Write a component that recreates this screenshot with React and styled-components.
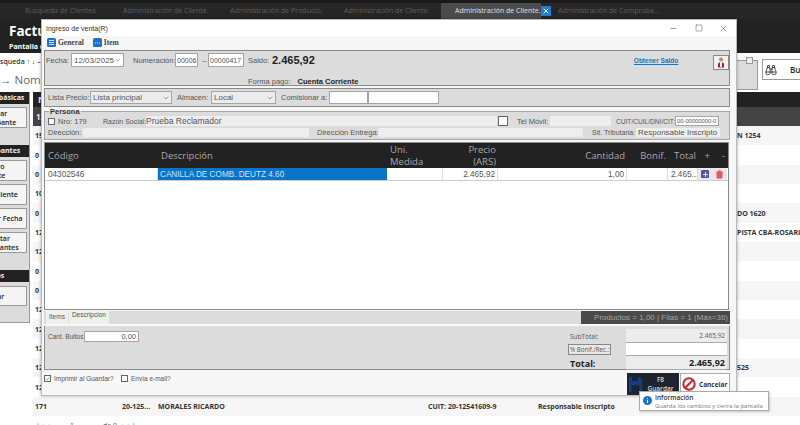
import React from 'react';
import styled, { createGlobalStyle } from 'styled-components';
import { Trash2, Plus, Check, X, Minus, Square, ChevronDown, Binoculars } from 'lucide-react';

const GlobalStyle = createGlobalStyle`
  html, body { margin: 0; padding: 0; background: #fff; }
  * { box-sizing: border-box; }
`;

/* background screen */
const Page = styled.div`
  position: relative;
  width: 800px;
  height: 425px;
  overflow: hidden;
  font-family: "Open Sans", sans-serif;
  background: #fff;
  display: flex;
  flex-direction: column;
`;
const TabBar = styled.div`
  height: 19px;
  flex: none;
  background: #262626;
  border-top: 3px solid #1a1a1a;
  display: flex;
  padding-left: 25px;
`;
const AppTab = styled.div`
  width: ${p => p.$w}px;
  flex: none;
  font-size: 7px;
  line-height: 15px;
  white-space: nowrap;
  color: ${p => (p.$active ? '#e0e0e0' : '#5e5e5e')};
  background: ${p => (p.$active ? '#4b4b4b' : 'transparent')};
  padding-left: ${p => (p.$active ? 14 : 0)}px;
`;
const TabClose = styled.div`
  width: 10px;
  height: 10px;
  margin: 3px 7px 0 0;
  flex: none;
  background: #1d7fd0;
  color: #fff;
  display: flex;
  align-items: center;
  justify-content: center;
`;
const Header = styled.div`
  height: 34px;
  flex: none;
  background: #222;
  color: #fff;
  padding: 2px 0 0 9px;
`;
const HeaderTitle = styled.div`
  font-size: 13.5px;
  font-weight: 700;
  line-height: 20px;
`;
const HeaderSub = styled.div`
  font-size: 7px;
  font-weight: 700;
  line-height: 11px;
`;
const SearchBar = styled.div`
  height: 39px;
  flex: none;
  display: flex;
  justify-content: space-between;
  background: #fff;
`;
const SearchLeft = styled.div`
  padding-top: 1px;
`;
const SearchLabel = styled.div`
  font-size: 7px;
  font-weight: 600;
  color: #333;
  line-height: 16px;
  margin-left: -9px;
`;
const SearchValue = styled.div`
  font-size: 11.5px;
  color: #666;
  line-height: 20px;
  white-space: nowrap;
`;
const SearchRight = styled.div`
  display: flex;
  gap: 4px;
  padding-top: 6px;
`;
const CollapseBox = styled.div`
  width: 28px;
  height: 30px;
  margin-top: 1px;
  background: #dcdcdc;
  border: 1px solid #999;
  border-left: none;
  position: relative;
`;
const CollapseBtn = styled.div`
  position: absolute;
  top: -4px;
  left: 16px;
  width: 7px;
  height: 7px;
  background: #eee;
  border: 1px solid #999;
`;
const FindBtn = styled.div`
  width: 38px;
  height: 21px;
  flex: none;
  border: 1px solid #999;
  border-right: none;
  display: flex;
  align-items: center;
  gap: 13px;
  padding-left: 2px;
  font-size: 8px;
  font-weight: 600;
  color: #222;
  overflow: hidden;
  white-space: nowrap;
  svg { flex: none; }
`;
const Body = styled.div`
  display: flex;
  flex: 1;
  min-height: 0;
`;
const Sidebar = styled.div`
  width: 70px;
  margin-left: -40px;
  flex: none;
  height: 231px;
  background: #dcdcdc;
  border-bottom: 1px solid #999;
  border-right: 1px solid #999;
  display: flex;
  flex-direction: column;
`;
const SideTitle = styled.div`
  height: 12px;
  flex: none;
  background: #222;
  color: #eee;
  font-size: 7px;
  font-weight: 700;
  line-height: 12px;
  text-align: center;
  margin-top: ${p => p.$top || 0}px;
  white-space: nowrap;
`;
const SideBtn = styled.div`
  height: ${p => p.$h || 21}px;
  flex: none;
  margin: ${p => p.$top ?? 3}px 2px 0 0;
  background: #f5f5f5;
  border: 1px solid #999;
  font-size: 7px;
  font-weight: 600;
  line-height: 9px;
  color: #222;
  display: flex;
  align-items: center;
  justify-content: center;
  text-align: center;
`;
const Main = styled.div`
  flex: 1;
  min-width: 0;
  margin-left: 3px;
  display: flex;
  flex-direction: column;
`;
const GridTitle = styled.div`
  height: 15px;
  flex: none;
  background: #222;
  color: #eee;
  font-size: 9px;
  font-weight: 700;
  padding-left: 5px;
  line-height: 15px;
`;
const GridFilter = styled.div`
  height: 19px;
  flex: none;
  background: #444;
  color: #eee;
  font-size: 8px;
  font-weight: 700;
  padding-left: 3px;
  line-height: 19px;
`;
const Row = styled.div`
  height: 19.35px;
  flex: none;
  display: grid;
  grid-template-columns: 87px 36px 270px 110px 1fr 63px;
  padding-left: 2px;
  align-items: center;
  font-size: 7px;
  font-weight: 700;
  color: #333;
  background: ${p => (p.$shaded ? '#f6f6f6' : '#fff')};
  white-space: nowrap;
  overflow: hidden;
`;
const Pager = styled.div`
  display: flex;
  padding: 5px 0 0 3px;
  font-size: 7px;
  color: #555;
`;
const PagerItem = styled.span`
  width: ${p => p.$w}px;
  flex: none;
`;

/* dialog */
const Dialog = styled.div`
  position: absolute;
  left: 41px;
  top: 19px;
  width: 696px;
  height: 377px;
  background: #f7f7f7;
  border: 1px solid #bbb;
  box-shadow: 0 0 3px rgba(0, 0, 0, 0.35);
  font-family: "Liberation Sans", Arial, sans-serif;
  font-size: 7.5px;
  color: #444;
  display: flex;
  flex-direction: column;
`;
const TitleBar = styled.div`
  height: 16px;
  flex: none;
  background: #fff;
  display: flex;
  justify-content: space-between;
  align-items: center;
  padding: 0 0 0 4px;
  color: #333;
  font-size: 7px;
`;
const WinBtns = styled.div`
  display: flex;
  align-items: center;
  gap: 16.5px;
  padding-right: 8px;
  color: #555;
`;
const Ribbon = styled.div`
  height: 13px;
  flex: none;
  display: flex;
  align-items: center;
  gap: 9px;
  padding-left: 5px;
`;
const RibbonItem = styled.div`
  display: flex;
  align-items: center;
  gap: 2px;
  font-family: "Liberation Serif", serif;
  font-size: 7.5px;
  font-weight: 700;
  color: #444;
`;
const Panel = styled.div`
  flex: none;
  margin: 1px 6px 1px 2px;
  background: #dcdcdc;
  border: 1px solid #8a8a8a;
  height: ${p => p.$h}px;
`;
const FlexRow = styled.div`
  display: flex;
  align-items: center;
  height: ${p => p.$h}px;
  margin-top: ${p => p.$mt || 0}px;
  padding-left: ${p => p.$pl || 0}px;
`;
const Label = styled.span`
  flex: none;
  width: ${p => (p.$w ? `${p.$w}px` : 'auto')};
  margin-left: ${p => p.$ml || 0}px;
  font-size: ${p => p.$fs || 7.5}px;
  white-space: nowrap;
  color: #555;
`;
const Input = styled.div`
  flex: none;
  width: ${p => p.$w}px;
  height: ${p => p.$h || 14}px;
  margin-left: ${p => p.$ml || 0}px;
  background: ${p => p.$bg || '#fff'};
  border: ${p => (p.$plain ? 'none' : '1px solid #a5a5a5')};
  padding: 0 ${p => p.$pad ?? 2}px;
  display: flex;
  align-items: center;
  justify-content: ${p => (p.$right ? 'flex-end' : 'flex-start')};
  white-space: nowrap;
  overflow: hidden;
  color: #555;
  font-size: ${p => p.$fs || 7.5}px;
`;
const Select = styled(Input)`
  justify-content: space-between;
  padding-right: 1px;
  font-size: 8px;
`;
const SaldoValue = styled.span`
  font-size: 11px;
  font-weight: 700;
  color: #222;
  margin-left: 4px;
`;
const BoldValue = styled.span`
  font-weight: 700;
  color: #222;
  font-size: 7.5px;
  margin-left: 7px;
`;
const LinkText = styled.a`
  color: #1a73c8;
  font-size: 6.5px;
  font-weight: 700;
  text-decoration: underline;
  margin-left: 319px;
  white-space: nowrap;
`;
const IconBtn = styled.div`
  width: 16px;
  height: 15px;
  margin: 4px 0 0 auto;
  flex: none;
  background: #f2f2f2;
  border: 1px solid #888;
  display: flex;
  align-items: center;
  justify-content: center;
`;
const Persona = styled.fieldset`
  flex: none;
  margin: 0 6px 0 2px;
  padding: 0 0 0 2px;
  height: 32px;
  background: #dcdcdc;
  border: 1px solid #a5a5a5;
`;
const Legend = styled.legend`
  font-size: 7.5px;
  font-weight: 700;
  color: #333;
  padding: 0 1px;
  margin-left: 2px;
  line-height: 7px;
`;
const CheckBox = styled.span`
  flex: none;
  width: ${p => p.$s || 7}px;
  height: ${p => p.$s || 7}px;
  background: #fff;
  border: 1px solid #666;
  display: flex;
  align-items: center;
  justify-content: center;
  margin-left: ${p => p.$ml || 0}px;
`;
const TableBox = styled.div`
  flex: none;
  margin: 2px 7px 0 2px;
  height: 168px;
  background: #fff;
  border: 1px solid #8a8a8a;
`;
const ColRow = styled.div`
  display: grid;
  grid-template-columns: 113px 229px 56px 55px 129px 41px 30px 14px 15px;
`;
const HeadRow = styled(ColRow)`
  height: 25px;
  background: #222;
  font-family: "Open Sans", sans-serif;
  font-size: 9.5px;
  color: #a8a8a8;
`;
const HeadCell = styled.div`
  display: flex;
  align-items: center;
  justify-content: ${p => (p.$right ? 'flex-end' : 'flex-start')};
  text-align: ${p => (p.$right ? 'right' : 'left')};
  padding: 0 ${p => (p.$right ? 2 : 0)}px 0 ${p => (p.$right ? 0 : 3)}px;
  line-height: 12px;
`;
const BodyRow = styled(ColRow)`
  height: 13px;
  border-bottom: 1px solid #ccc;
  font-size: 8.2px;
`;
const Cell = styled.div`
  display: flex;
  align-items: center;
  justify-content: ${p => (p.$right ? 'flex-end' : 'flex-start')};
  padding: 0 2px 0 ${p => (p.$right ? 0 : p.$sel ? 2 : 3)}px;
  background: ${p => (p.$sel ? '#0a74c9' : 'transparent')};
  color: ${p => (p.$sel ? '#cfe4f5' : '#555')};
  border-right: ${p => (p.$sel ? 'none' : '1px solid #ddd')};
  white-space: nowrap;
  overflow: hidden;
`;
const RowBtn = styled.div`
  display: flex;
  align-items: center;
  justify-content: center;
  background: #e8e8e8;
`;
const AddIcon = styled.span`
  width: 8px;
  height: 8px;
  background: #4a55b5;
  border-radius: 1px;
  display: flex;
  align-items: center;
  justify-content: center;
`;
const TabStrip = styled.div`
  flex: none;
  margin: 1px 6px 0 2px;
  height: 13px;
  background: #dcdcdc;
  display: flex;
  justify-content: space-between;
`;
const Tabs = styled.div`
  display: flex;
  padding-left: 2px;
`;
const InnerTab = styled.div`
  padding: ${p => (p.$on ? 0 : 2)}px 3px 0;
  font-size: 6.5px;
  color: #555;
  background: ${p => (p.$on ? '#eaf2ea' : '#f0f0f0')};
  margin-left: ${p => (p.$on ? 1 : 0)}px;
`;
const StatusBar = styled.div`
  width: 149px;
  background: #4a4a4a;
  color: #a5a5a5;
  font-size: 8px;
  display: flex;
  align-items: center;
  justify-content: flex-end;
  padding-right: 2px;
  white-space: nowrap;
`;
const Bottom = styled.div`
  flex: none;
  margin: 2px 6px 0 2px;
  height: 44px;
  background: #dcdcdc;
  border: 1px solid #8a8a8a;
  border-top: none;
  display: flex;
  justify-content: space-between;
`;
const Totals = styled.div`
  display: grid;
  grid-template-columns: 58px 101px;
  grid-template-rows: 14px 13px 14px;
  padding-top: 3px;
  margin-right: 2px;
  font-family: "Open Sans", sans-serif;
`;
const TotalLabel = styled.div`
  font-size: ${p => (p.$big ? 9 : 6.5)}px;
  font-weight: ${p => (p.$big ? 700 : 400)};
  color: ${p => (p.$big ? '#222' : '#555')};
  display: flex;
  align-items: center;
  padding-left: 2px;
`;
const BonifBtn = styled.span`
  border: 1px solid #888;
  background: #e8e8e8;
  font-size: 6.2px;
  padding: 0 1px;
  margin-left: -2px;
  white-space: nowrap;
`;
const TotalValue = styled.div`
  background: ${p => (p.$white ? '#fff' : '#ececec')};
  border-bottom: 1px solid #aaa;
  font-size: ${p => (p.$big ? 9 : 6.5)}px;
  font-weight: ${p => (p.$big ? 700 : 400)};
  color: ${p => (p.$big ? '#222' : '#555')};
  display: flex;
  align-items: center;
  justify-content: flex-end;
  padding-right: 2px;
`;
const Actions = styled.div`
  flex: 1;
  display: flex;
  justify-content: space-between;
  padding: 3px 6px 0 2px;
`;
const Checks = styled.div`
  display: flex;
  align-items: flex-start;
  padding-top: 2px;
  gap: 3px;
`;
const CheckLabel = styled.span`
  width: ${p => (p.$w ? `${p.$w}px` : 'auto')};
  font-size: 6.5px;
  color: #555;
  white-space: nowrap;
`;
const ActionBtns = styled.div`
  display: flex;
  gap: 1px;
`;
const SaveBtn = styled.div`
  width: 52px;
  height: 22px;
  background: #1c2430;
  color: #ddd;
  font-family: "Open Sans", sans-serif;
  font-size: 6.5px;
  font-weight: 600;
  line-height: 9px;
  display: flex;
  align-items: center;
  padding-left: 2px;
`;
const SaveText = styled.div`
  flex: 1;
  text-align: center;
`;
const CancelBtn = styled.div`
  width: 50px;
  height: 22px;
  background: #fff;
  border: 1px solid #aaa;
  color: #333;
  font-family: "Open Sans", sans-serif;
  font-size: 6.5px;
  font-weight: 700;
  display: flex;
  align-items: center;
  gap: 3px;
  padding-left: 1px;
`;
const Tooltip = styled.div`
  position: absolute;
  left: 639px;
  top: 391px;
  width: 130px;
  height: 20px;
  background: #fff;
  border: 1px solid #aaa;
  box-shadow: 1px 1px 2px rgba(0, 0, 0, 0.2);
  font-family: "Open Sans", sans-serif;
  display: flex;
  gap: 3px;
  padding: 2px 0 0 3px;
`;
const TipTitle = styled.div`
  font-size: 6.5px;
  font-weight: 600;
  color: #333;
  line-height: 8px;
`;
const TipText = styled.div`
  font-size: 6px;
  color: #777;
  line-height: 9px;
  white-space: nowrap;
`;
const InfoSvg = styled.svg`
  flex: none;
  margin-top: 2px;
`;

const fieldBg = '#eeeeee';

const BlueIcon = ({ lines }) => (
  <svg width="9" height="9" viewBox="0 0 9 9">
    <rect width="9" height="9" rx="1.5" fill="#1c72c4" />
    {lines ? (
      <path d="M2 2.5h5M2 4.5h5M2 6.5h5" stroke="#fff" strokeWidth=".8" />
    ) : (
      <path d="M2 5h1M4 5h1M6 5h1" stroke="#fff" strokeWidth=".8" />
    )}
  </svg>
);

const PersonIcon = () => (
  <svg width="8" height="11" viewBox="0 0 8 11">
    <circle cx="4" cy="2.5" r="2" fill="#b98a62" />
    <path d="M1 10.500V6.500Q4 3.500 7 6.500v4Z" fill="#8e2f2a" />
    <path d="M3 5h2v5H3z" fill="#eee" />
  </svg>
);

const FloppyIcon = () => (
  <svg width="13" height="15" viewBox="0 0 13 15">
    <path d="M0 0h10l3 3v12H0z" fill="#123f82" />
    <path d="M3 0h6v4H3zM2.500 8h8v7h-8z" fill="#1c2430" />
  </svg>
);

const NoIcon = () => (
  <svg width="14" height="14" viewBox="0 0 14 14">
    <circle cx="7" cy="7" r="5.700" fill="none" stroke="#c9252b" strokeWidth="2" />
    <path d="M3 11 11 3" stroke="#c9252b" strokeWidth="2" />
  </svg>
);

const InfoIcon = () => (
  <InfoSvg width="9" height="9" viewBox="0 0 9 9">
    <circle cx="4.500" cy="4.500" r="4.500" fill="#1c72c4" />
    <path d="M4.500 2v.8M4.500 3.800V7" stroke="#fff" />
  </InfoSvg>
);

const rows = [
  ['154', '', '', '', '', 'N 1254'],
  ['0', '', '', '', '', ''],
  ['0', '', '', '', '', ''],
  ['10', '', '', '', '', ''],
  ['0', '', '', '', '', 'DO 1620'],
  ['12', '', '', '', '', 'PISTA CBA-ROSARIO'],
  ['12', '', '', '', '', ''],
  ['0', '', '', '', '', ''],
  ['0', '', '', '', '', ''],
  ['12', '', '', '', '', ''],
  ['12', '', '', '', '', ''],
  ['12', '', '', '', '', ''],
  ['12', '', '', '', '', '525'],
  ['12', '', '', '', '', ''],
  ['171', '20-125...', 'MORALES RICARDO', 'CUIT: 20-12541609-9', 'Responsable Inscripto', ''],
];

const App = () => {
  return (
    <Page>
      <GlobalStyle />
      <TabBar>
        <AppTab $w={98}>Busqueda de Clientes</AppTab>
        <AppTab $w={107}>Administración de Cliente.</AppTab>
        <AppTab $w={114}>Administración de Producto.</AppTab>
        <AppTab $w={97}>Administración de Cliente.</AppTab>
        <AppTab $w={100} $active>Administración de Cliente.</AppTab>
        <TabClose><X size={8} strokeWidth={3} /></TabClose>
        <AppTab $w={100}>Administración de Comproba...</AppTab>
      </TabBar>
      <Header>
        <HeaderTitle>Facturación</HeaderTitle>
        <HeaderSub>Pantalla de ventas</HeaderSub>
      </Header>
      <SearchBar>
        <SearchLeft>
          <SearchLabel>Búsqueda ↑ ↓ –</SearchLabel>
          <SearchValue>→ Nombre</SearchValue>
        </SearchLeft>
        <SearchRight>
          <CollapseBox><CollapseBtn /></CollapseBox>
          <FindBtn><Binoculars size={12} color="#444" />Buscar</FindBtn>
        </SearchRight>
      </SearchBar>
      <Body>
        <Sidebar>
          <SideTitle>Opciones básicas</SideTitle>
          <SideBtn>Generar<br />comprobante</SideBtn>
          <SideTitle $top={17}>Comprobantes</SideTitle>
          <SideBtn>Nuevo<br />Cliente</SideBtn>
          <SideBtn>Buscar Cliente</SideBtn>
          <SideBtn>Buscar por Fecha</SideBtn>
          <SideBtn>Consultar<br />Comprobantes</SideBtn>
          <SideTitle $top={17}>Otros</SideTitle>
          <SideBtn $h={20} $top={4}>Cerrar</SideBtn>
        </Sidebar>
        <Main>
          <GridTitle>Nro</GridTitle>
          <GridFilter>12</GridFilter>
          {rows.map((r, i) => (
            <Row key={i} $shaded={i % 2 === 0}>
              {r.map((c, j) => <span key={j}>{c}</span>)}
            </Row>
          ))}
          <Pager>
            <PagerItem $w={34}>|◂ ◂</PagerItem>
            <PagerItem $w={33}>1</PagerItem>
            <PagerItem $w={19}>de 9</PagerItem>
            <PagerItem $w={24}>▸ ▸|</PagerItem>
          </Pager>
        </Main>
      </Body>

      <Dialog>
        <TitleBar>
          <span>Ingreso de venta(R)</span>
          <WinBtns>
            <Minus size={9} strokeWidth={1.5} />
            <Square size={8} strokeWidth={1.5} />
            <X size={9} strokeWidth={1.5} />
          </WinBtns>
        </TitleBar>
        <Ribbon>
          <RibbonItem><BlueIcon lines />General</RibbonItem>
          <RibbonItem><BlueIcon />Item</RibbonItem>
        </Ribbon>
        <Panel $h={36}>
          <FlexRow $h={18} $pl={1}>
            <Label $w={25}>Fecha:</Label>
            <Select $w={53}>12/03/2025<ChevronDown size={8} color="#777" /></Select>
            <Label $ml={9} $w={42}>Numeración:</Label>
            <Input $w={23} $fs={7} $pad={1}>00006</Input>
            <Label $ml={4} $w={6}>--</Label>
            <Input $w={36} $fs={7} $pad={1}>00000417</Input>
            <Label $ml={4} $w={20}>Saldo:</Label>
            <SaldoValue>2.465,92</SaldoValue>
            <LinkText>Obtener Saldo</LinkText>
            <IconBtn><PersonIcon /></IconBtn>
          </FlexRow>
          <FlexRow $h={9} $mt={8} $pl={203}>
            <Label>Forma pago:</Label>
            <BoldValue>Cuenta Corriente</BoldValue>
          </FlexRow>
        </Panel>
        <Panel $h={19}>
          <FlexRow $h={17} $pl={3}>
            <Label $w={42}>Lista Precio:</Label>
            <Select $w={82} $h={13} $bg="#ececec">Lista principal<ChevronDown size={8} color="#777" /></Select>
            <Label $ml={5} $w={34}>Almacen:</Label>
            <Select $w={65} $h={13} $bg="#ececec">Local<ChevronDown size={8} color="#777" /></Select>
            <Label $ml={5} $w={48}>Comisionar a:</Label>
            <Input $w={39} $h={13} />
            <Input $w={71} $h={13} />
          </FlexRow>
        </Panel>
        <Persona>
          <Legend>Persona</Legend>
          <FlexRow $h={12} $pl={1}>
            <CheckBox $s={7} />
            <Label $ml={3} $w={45}>Nro: 179</Label>
            <Label $w={43} $fs={7}>Razón Social:</Label>
            <Input $w={351} $h={10} $plain $bg={fieldBg} $fs={8.5} $pad={0}>Prueba Reclamador</Input>
            <CheckBox $s={10} $ml={1} />
            <Label $ml={9} $w={33}>Tel Móvil:</Label>
            <Input $w={61} $h={10} $plain $bg={fieldBg} />
            <Label $ml={5} $w={59} $fs={6.6}>CUIT/CUIL/DNI/CIT:</Label>
            <Input $w={44} $h={10} $fs={5.8} $pad={1}>00-00000000-0</Input>
          </FlexRow>
          <FlexRow $h={11} $pl={1}>
            <Label $w={35}>Dirección:</Label>
            <Input $w={226} $h={9} $plain $bg={fieldBg} />
            <Label $ml={8} $w={61}>Dirección Entrega:</Label>
            <Input $w={205} $h={9} $plain $bg={fieldBg} />
            <Label $ml={9} $w={44} $fs={7}>Sit. Tributaria:</Label>
            <Input $w={84} $h={9} $plain $bg={fieldBg} $fs={8}>Responsable Inscripto</Input>
          </FlexRow>
        </Persona>
        <TableBox>
          <HeadRow>
            <HeadCell>Código</HeadCell>
            <HeadCell>Descripción</HeadCell>
            <HeadCell>Uni.<br />Medida</HeadCell>
            <HeadCell $right>Precio<br />(ARS)</HeadCell>
            <HeadCell $right>Cantidad</HeadCell>
            <HeadCell $right>Bonif.</HeadCell>
            <HeadCell $right>Total</HeadCell>
            <HeadCell $right>+</HeadCell>
            <HeadCell $right>-</HeadCell>
          </HeadRow>
          <BodyRow>
            <Cell>04302546</Cell>
            <Cell $sel>CANILLA DE COMB. DEUTZ 4.60</Cell>
            <Cell />
            <Cell $right>2.465,92</Cell>
            <Cell $right>1,00</Cell>
            <Cell />
            <Cell>2.465...</Cell>
            <RowBtn><AddIcon><Plus size={7} color="#fff" strokeWidth={3} /></AddIcon></RowBtn>
            <RowBtn><Trash2 size={9} color="#e8596a" fill="#e8596a" /></RowBtn>
          </BodyRow>
        </TableBox>
        <TabStrip>
          <Tabs>
            <InnerTab>Items</InnerTab>
            <InnerTab $on>Descripcion</InnerTab>
          </Tabs>
          <StatusBar>Productos = 1,00 | Filas = 1 (Máx=36)</StatusBar>
        </TabStrip>
        <Bottom>
          <FlexRow $h={14} $mt={3} $pl={3}>
            <Label $w={36} $fs={6.5}>Cant. Bultos:</Label>
            <Input $w={55} $h={11} $right>0,00</Input>
          </FlexRow>
          <Totals>
            <TotalLabel>SubTotal:</TotalLabel>
            <TotalValue>2.465,92</TotalValue>
            <TotalLabel><BonifBtn>% Bonif./Rec.:</BonifBtn></TotalLabel>
            <TotalValue $white />
            <TotalLabel $big>Total:</TotalLabel>
            <TotalValue $big>2.465,92</TotalValue>
          </Totals>
        </Bottom>
        <Actions>
          <Checks>
            <CheckBox $s={7}><Check size={6} color="#555" strokeWidth={3} /></CheckBox>
            <CheckLabel $w={64}>Imprimir al Guardar?</CheckLabel>
            <CheckBox $s={7} />
            <CheckLabel>Envía e-mail?</CheckLabel>
          </Checks>
          <ActionBtns>
            <SaveBtn><FloppyIcon /><SaveText>F8<br />Guardar</SaveText></SaveBtn>
            <CancelBtn><NoIcon />Cancelar</CancelBtn>
          </ActionBtns>
        </Actions>
      </Dialog>

      <Tooltip>
        <InfoIcon />
        <div>
          <TipTitle>Información</TipTitle>
          <TipText>Guarda los cambios y cierra la pantalla</TipText>
        </div>
      </Tooltip>
    </Page>
  );
};

export default App;
